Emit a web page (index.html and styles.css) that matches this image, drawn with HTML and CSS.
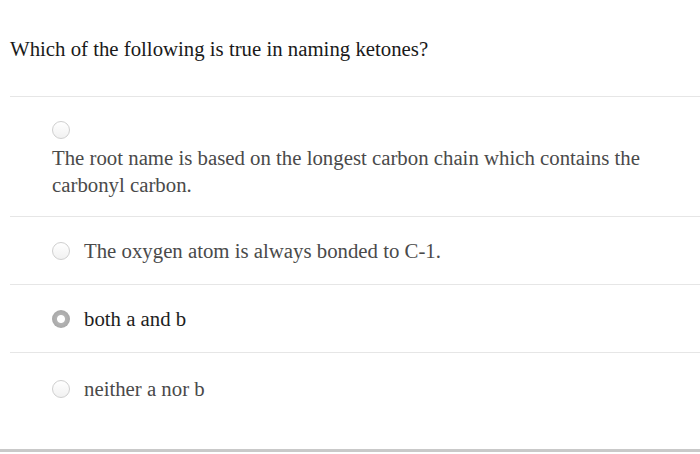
FILE: index.html
```html
<!DOCTYPE html>
<html>
<head>
<meta charset="utf-8">
<link rel="stylesheet" href="styles.css">
</head>
<body>
<div class="page">
  <div class="question">
    <div class="title">Which of the following is true in naming ketones?</div>
    <div class="option stacked">
      <span class="radio"></span>
      <div class="label">The root name is based on the longest carbon chain which contains the carbonyl carbon.</div>
    </div>
    <div class="option">
      <span class="radio"></span>
      <div class="label">The oxygen atom is always bonded to C-1.</div>
    </div>
    <div class="option">
      <span class="radio checked"></span>
      <div class="label selected">both a and b</div>
    </div>
    <div class="option last">
      <span class="radio"></span>
      <div class="label">neither a nor b</div>
    </div>
  </div>
  <div class="footer"></div>
</div>
</body>
</html>
```

FILE: styles.css
```css
html, body {
  margin: 0;
  padding: 0;
  background: #fff;
}
.page {
  width: 700px;
  font-family: "Liberation Serif", "Times New Roman", serif;
}
.question {
  padding-left: 10px;
  padding-bottom: 25px;
}
.title {
  height: 96px;
  display: flex;
  align-items: center;
  font-size: 20.8px;
  color: #1a1a1a;
  padding-top: 1px;
  box-sizing: border-box;
}
.option {
  border-top: 1px solid #e6e6e6;
  padding-left: 42px;
  height: 67px;
  display: flex;
  align-items: center;
  gap: 14px;
}
.option.stacked {
  height: auto;
  display: block;
  padding-top: 24px;
  padding-bottom: 18px;
  padding-right: 20px;
}
.option.stacked .label {
  margin-top: 5px;
}
.option.checked-row .label {
  margin-top: 2px;
}
.option.last {
  height: 71px;
}
.label {
  font-size: 20.8px;
  line-height: 27px;
  color: #4a4a4a;
}
.label.selected {
  color: #1e1e1e;
}
.radio {
  display: block;
  width: 18px;
  height: 18px;
  box-sizing: border-box;
  border-radius: 50%;
  border: 1.5px solid #cfcfcf;
  background: linear-gradient(#ffffff, #f1f1f1);
  flex: none;
}
.radio.checked {
  border: none;
  background: radial-gradient(circle at 50% 50%, #ffffff 0, #ffffff 3.5px, #b3b3b3 4.5px, #a8a8a8 9px);
}
.footer {
  height: 3px;
  background: #c9c9c9;
}
```
